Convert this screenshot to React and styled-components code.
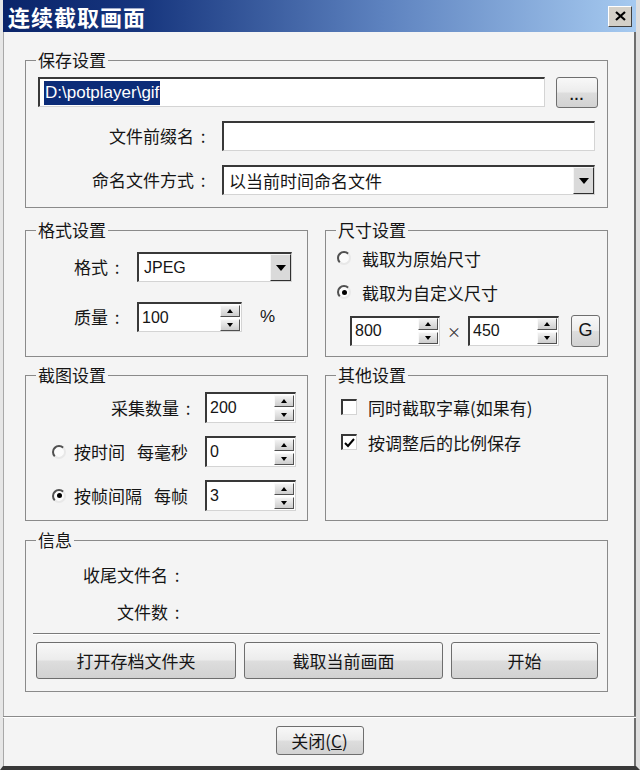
import React from 'react';
import styled, { createGlobalStyle, css } from 'styled-components';

const GlobalStyle = createGlobalStyle`
  html, body {
    margin: 0;
    padding: 0;
    background: #f4f4f4;
  }
  body {
    font-family: "Noto Sans CJK SC", "Noto Sans", sans-serif;
    font-size: 17px;
    color: #151515;
  }
`;

const sunken = css`
  box-sizing: border-box;
  background: #fff;
  border-style: solid;
  border-width: 2px 1px 1px 2px;
  border-color: #383838 #d4d4d4 #d4d4d4 #383838;
`;

const Window = styled.div`
  width: 640px;
  height: 770px;
  box-sizing: border-box;
  display: flex;
  flex-direction: column;
  background: #f4f4f4;
  border-left: 3px solid #e6e6e6;
  border-right: 4px solid #dedede;
  border-bottom: 4px solid #383838;
  box-shadow: inset 1px 0 0 #a8a8a8, inset -2px 0 0 #6e6e6e;
`;

const TitleBar = styled.div`
  height: 32px;
  flex: none;
  display: flex;
  align-items: center;
  padding: 0 4px 0 5px;
  background: linear-gradient(to right, #0a246a 0%, #17367e 22%, #5d82bf 60%, #a6caf0 100%);
`;

const Title = styled.div`
  color: #fff;
  font-weight: 700;
  font-size: 22px;
  letter-spacing: 1px;
  line-height: 32px;
`;

const CloseBox = styled.div`
  margin-left: auto;
  width: 24px;
  height: 21px;
  box-sizing: border-box;
  background: #d4d0c8;
  border: 1px solid;
  border-color: #ffffff #404040 #404040 #ffffff;
  display: flex;
  align-items: center;
  justify-content: center;
`;

const Body = styled.div`
  display: flex;
  flex-direction: column;
  padding: 19px 28px 24px 22px;
`;

const Group = styled.fieldset`
  margin: ${p => p.$mt || 0}px 0 0;
  padding: 0;
  min-width: 0;
  box-sizing: border-box;
  border: 1px solid #8a8a8a;
`;

const Legend = styled.legend`
  margin-left: 10px;
  padding: 0 2px;
  font-size: 17px;
  line-height: 18px;
`;

const GroupBody = styled.div`
  display: flex;
  flex-direction: column;
  gap: ${p => p.$gap || 0}px;
  padding: ${p => p.$pad};
`;

const Pair = styled.div`
  display: grid;
  grid-template-columns: 1fr 1fr;
  gap: 17px;
  margin-top: ${p => p.$mt}px;
`;

const Row = styled.div`
  display: flex;
  align-items: center;
  height: ${p => p.$h || 30}px;
  gap: ${p => p.$gap || 0}px;
  padding-left: ${p => p.$pl || 0}px;
  margin-top: ${p => p.$mt || 0}px;
  white-space: nowrap;
`;

const Label = styled.div`
  width: ${p => p.$w}px;
  flex: none;
  display: flex;
  justify-content: flex-end;
  align-items: center;
  white-space: nowrap;
  line-height: 22px;
`;

const Colon = styled.span`
  width: 14px;
  margin-left: 2px;
  text-align: center;
`;

const RadioLabel = styled.div`
  width: ${p => p.$w}px;
  flex: none;
  display: flex;
  align-items: center;
  gap: 8px;
  padding: 0 7px 0 26px;
  box-sizing: border-box;
  white-space: nowrap;
`;

const Suffix = styled.span`
  margin-left: auto;
`;

const Field = styled.div`
  ${sunken};
  height: ${p => p.$h || 30}px;
  ${p => (p.$w ? `width: ${p.$w}px; flex: none;` : 'flex: 1;')}
  margin-right: ${p => p.$mr || 0}px;
  display: flex;
  align-items: center;
  padding-left: ${p => p.$pl ?? 3}px;
  font-family: "Liberation Sans", "Noto Sans CJK SC", sans-serif;
  font-size: 16px;
  white-space: nowrap;
  overflow: hidden;
`;

const CjkText = styled.span`
  font-family: "Noto Sans CJK SC", sans-serif;
  font-size: 17px;
`;

const Selected = styled.span`
  background: #0c2c78;
  color: #fff;
  padding: 0 1px;
  line-height: 24px;
  font-size: 17px;
`;

const DropBtn = styled.span`
  margin-left: auto;
  width: 21px;
  height: 100%;
  flex: none;
  box-sizing: border-box;
  background: #dadada;
  border: 1px solid;
  border-color: #f6f6f6 #303030 #303030 #f6f6f6;
  display: flex;
  align-items: center;
  justify-content: center;
  &::after {
    content: '';
    border-left: 5px solid transparent;
    border-right: 5px solid transparent;
    border-top: 6px solid #000;
  }
`;

const SpinCol = styled.span`
  margin-left: auto;
  margin-right: 1px;
  display: flex;
  flex-direction: column;
  gap: 2px;
`;

const SpinBtn = styled.span`
  width: 20px;
  height: 12px;
  box-sizing: border-box;
  background: linear-gradient(#f2f2f2, #cdcdcd);
  border: 1px solid;
  border-color: #fafafa #505050 #505050 #fafafa;
  display: flex;
  align-items: center;
  justify-content: center;
  &::after {
    content: '';
    border-left: 3px solid transparent;
    border-right: 3px solid transparent;
    ${p => (p.$up ? 'border-bottom: 4px solid #000;' : 'border-top: 4px solid #000;')}
  }
`;

const Button = styled.button`
  width: ${p => p.$w}px;
  height: ${p => p.$h}px;
  flex: none;
  box-sizing: border-box;
  padding: 0;
  border: 1px solid #6e6e6e;
  border-radius: 3px;
  background: linear-gradient(#f8f8f8, #ececec 48%, #dddddd 52%, #d2d2d2);
  font-family: "Noto Sans CJK SC", sans-serif;
  font-size: 17px;
  color: #151515;
  margin-left: ${p => p.$ml || 0}px;
`;

const DotsButton = styled(Button)`
  font-family: "Liberation Sans", sans-serif;
  font-size: 14px;
  font-weight: 700;
  letter-spacing: 1px;
  padding-top: 6px;
`;

const GButton = styled(Button)`
  font-family: "Liberation Sans", sans-serif;
  font-size: 18px;
`;

const Radio = styled.span`
  width: 14px;
  height: 14px;
  flex: none;
  box-sizing: border-box;
  border-radius: 50%;
  border: 2px solid;
  border-color: #505050 #e8e8e8 #e8e8e8 #505050;
  background: #fbfbfb;
  display: grid;
  place-items: center;
  &::after {
    content: '';
    width: 5px;
    height: 5px;
    border-radius: 50%;
    background: #000;
    display: ${p => (p.$on ? 'block' : 'none')};
  }
`;

const CheckBox = styled.span`
  ${sunken};
  width: 16px;
  height: 16px;
  flex: none;
  display: flex;
  align-items: center;
  justify-content: center;
`;

const Pct = styled.span`
  margin-left: 5px;
  font-family: "Liberation Sans", sans-serif;
  font-size: 17px;
`;

const Times = styled.span`
  width: 28px;
  text-align: center;
  font-size: 14px;
  color: #333;
`;

const Divider = styled.div`
  height: 1px;
  margin: 10px 7px 8px 7px;
  background: #7a7a7a;
  box-shadow: 0 1px 0 #ffffff;
`;

const ButtonRow = styled.div`
  display: flex;
  gap: 8px;
  padding-left: 10px;
`;

const Footer = styled.div`
  flex: 1;
  display: flex;
  justify-content: center;
  align-items: flex-start;
  padding-top: 9px;
  border-top: 1px solid #8a8a8a;
  box-shadow: inset 0 1px 0 #ffffff;
`;

const Spin = ({ value, w, h }) => (
  <Field $w={w} $h={h}>
    {value}
    <SpinCol>
      <SpinBtn $up />
      <SpinBtn />
    </SpinCol>
  </Field>
);

const Check = ({ on }) => (
  <CheckBox>
    {on && (
      <svg width="11" height="10" viewBox="0 0 11 10">
        <path d="M1 5 L4 8 L10 1" fill="none" stroke="#000" strokeWidth="2" />
      </svg>
    )}
  </CheckBox>
);

const FieldLabel = ({ w, children }) => (
  <Label $w={w}>
    {children}
    <Colon>:</Colon>
  </Label>
);

export default function App() {
  return (
    <>
      <GlobalStyle />
      <Window>
        <TitleBar>
          <Title>连续截取画面</Title>
          <CloseBox>
            <svg width="11" height="10" viewBox="0 0 11 10">
              <path d="M1 1 L10 9 M10 1 L1 9" stroke="#000" strokeWidth="2.2" />
            </svg>
          </CloseBox>
        </TitleBar>

        <Body>
          <Group>
            <Legend>保存设置</Legend>
            <GroupBody $gap={14} $pad="8px 9px 12px 12px">
              <Row $gap={11}>
                <Field $pl={4}>
                  <Selected>{'D:\\potplayer\\gif'}</Selected>
                </Field>
                <DotsButton $w={42} $h={31}>...</DotsButton>
              </Row>
              <Row $gap={12}>
                <FieldLabel w={172}>文件前缀名</FieldLabel>
                <Field $mr={3} />
              </Row>
              <Row $gap={12}>
                <FieldLabel w={172}>命名文件方式</FieldLabel>
                <Field $mr={3} $pl={5}>
                  <CjkText>以当前时间命名文件</CjkText>
                  <DropBtn />
                </Field>
              </Row>
            </GroupBody>
          </Group>

          <Pair $mt={13}>
            <Group>
              <Legend>格式设置</Legend>
              <GroupBody $gap={20} $pad="13px 0 24px 0">
                <Row $gap={13}>
                  <FieldLabel w={98}>格式</FieldLabel>
                  <Field $w={155} $pl={5}>
                    JPEG
                    <DropBtn />
                  </Field>
                </Row>
                <Row $gap={13}>
                  <FieldLabel w={98}>质量</FieldLabel>
                  <Spin value="100" w={105} />
                  <Pct>%</Pct>
                </Row>
              </GroupBody>
            </Group>
            <Group>
              <Legend>尺寸设置</Legend>
              <GroupBody $gap={12} $pad="8px 0 0 0">
                <Row $h={22} $pl={11} $gap={11}>
                  <Radio />
                  截取为原始尺寸
                </Row>
                <Row $h={22} $pl={11} $gap={11}>
                  <Radio $on />
                  截取为自定义尺寸
                </Row>
                <Row $h={31} $pl={24}>
                  <Spin value="800" w={90} />
                  <Times>×</Times>
                  <Spin value="450" w={91} />
                  <GButton $w={29} $h={32} $ml={12}>G</GButton>
                </Row>
              </GroupBody>
            </Group>
          </Pair>

          <Pair $mt={9}>
            <Group>
              <Legend>截图设置</Legend>
              <GroupBody $gap={13} $pad="8px 0 9px 0">
                <Row $h={31} $gap={10}>
                  <FieldLabel w={169}>采集数量</FieldLabel>
                  <Spin value="200" w={91} h={31} />
                </Row>
                <Row $h={31} $gap={10}>
                  <RadioLabel $w={169}>
                    <Radio />
                    按时间
                    <Suffix>每毫秒</Suffix>
                  </RadioLabel>
                  <Spin value="0" w={91} h={31} />
                </Row>
                <Row $h={31} $gap={10}>
                  <RadioLabel $w={169}>
                    <Radio $on />
                    按帧间隔
                    <Suffix>每帧</Suffix>
                  </RadioLabel>
                  <Spin value="3" w={91} h={31} />
                </Row>
              </GroupBody>
            </Group>
            <Group>
              <Legend>其他设置</Legend>
              <GroupBody $gap={13} $pad="12px 0 0 15px">
                <Row $h={22} $gap={11}>
                  <Check />
                  同时截取字幕(如果有)
                </Row>
                <Row $h={22} $gap={11}>
                  <Check on />
                  按调整后的比例保存
                </Row>
              </GroupBody>
            </Group>
          </Pair>

          <Group $mt={10}>
            <Legend>信息</Legend>
            <GroupBody $pad="15px 0 12px 0">
              <Row $h={22}>
                <FieldLabel w={158}>收尾文件名</FieldLabel>
              </Row>
              <Row $h={22} $mt={15}>
                <FieldLabel w={158}>文件数</FieldLabel>
              </Row>
              <Divider />
              <ButtonRow>
                <Button $w={200} $h={37}>打开存档文件夹</Button>
                <Button $w={199} $h={37}>截取当前画面</Button>
                <Button $w={147} $h={37}>开始</Button>
              </ButtonRow>
            </GroupBody>
          </Group>
        </Body>

        <Footer>
          <Button $w={88} $h={29}>
            关闭(<u>C</u>)
          </Button>
        </Footer>
      </Window>
    </>
  );
}
